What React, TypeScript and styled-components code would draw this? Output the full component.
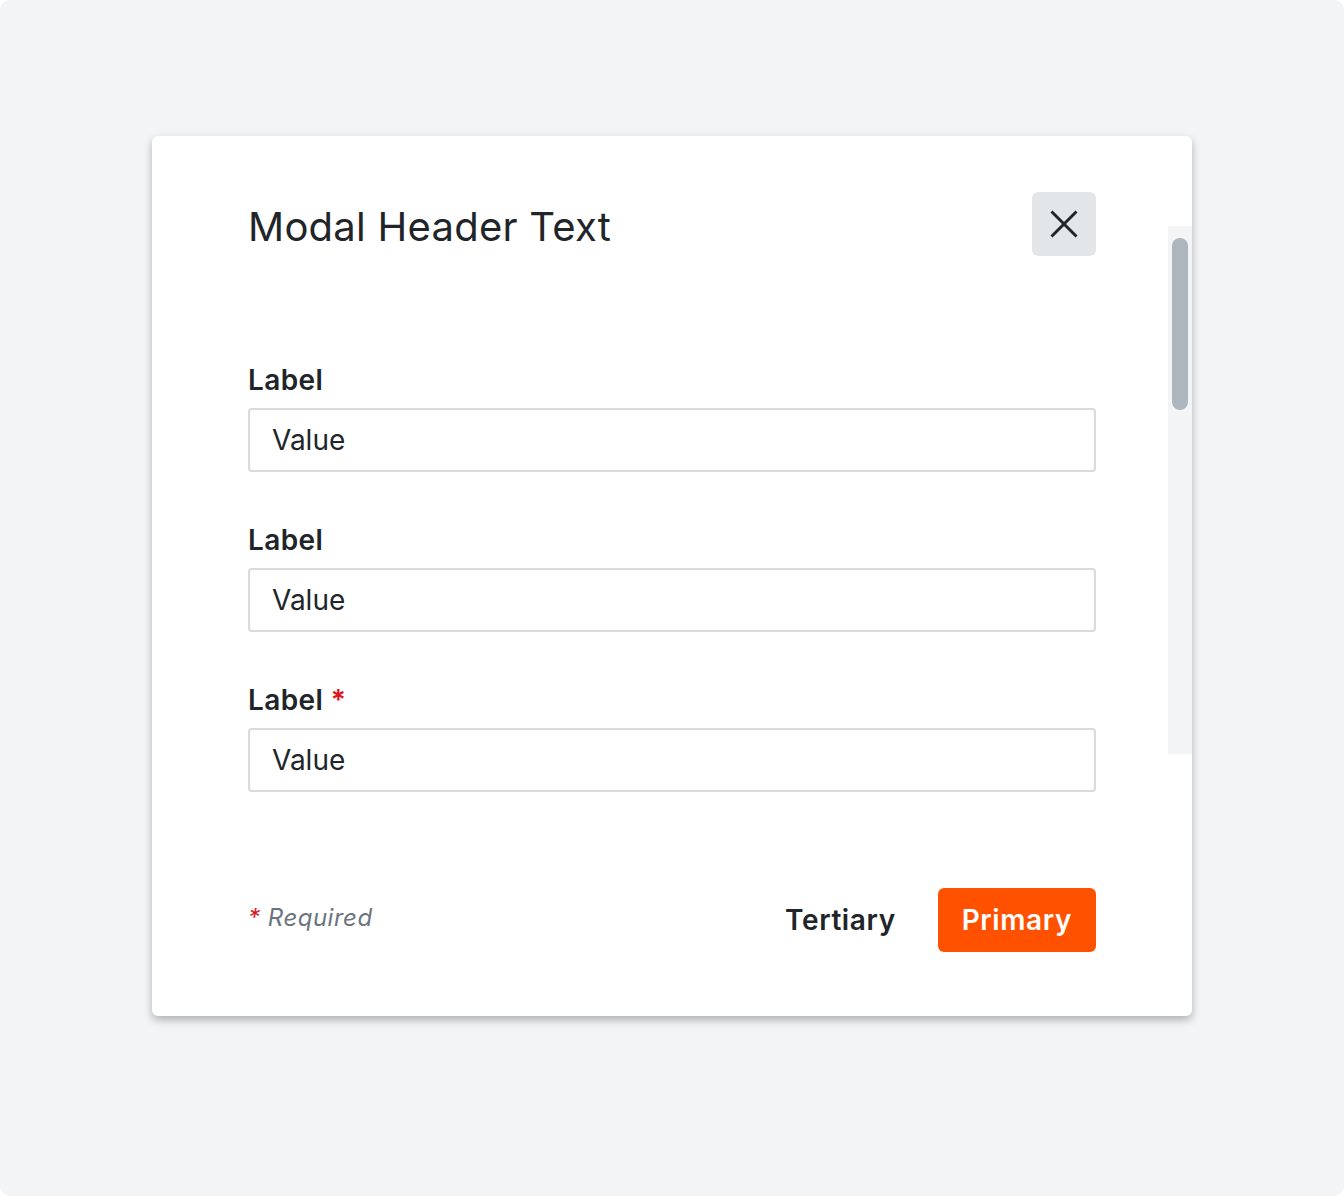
import React from "react";
import styled, { createGlobalStyle } from "styled-components";

const GlobalStyle = createGlobalStyle`
  html, body { margin: 0; padding: 0; background: #ffffff; }
  body { font-family: Inter, "Noto Sans", "Liberation Sans", sans-serif; color: #212529; }
  * { box-sizing: border-box; }
`;

const Page = styled.div`
  width: 1344px;
  height: 1196px;
  background: #f3f4f6;
  border-radius: 10px;
  display: flex;
  justify-content: center;
  align-items: flex-start;
  padding-top: 136px;
`;

const Modal = styled.div`
  width: 1040px;
  height: 880px;
  background: #ffffff;
  border-radius: 6px;
  box-shadow: 0 4px 8px rgba(0, 0, 0, 0.28);
  display: flex;
`;

const Main = styled.div`
  flex: 1;
  display: flex;
  flex-direction: column;
  padding: 56px 72px 64px 96px;
`;

const Rail = styled.div`
  width: 24px;
  padding-top: 90px;
  display: flex;
  flex-direction: column;
`;

const Track = styled.div`
  height: 528px;
  background: #f3f4f6;
  padding: 12px 4px 0;
`;

const Thumb = styled.div`
  height: 172px;
  border-radius: 8px;
  background: #adb5bd;
`;

const Header = styled.div`
  height: 64px;
  display: flex;
  align-items: center;
  justify-content: space-between;
`;

const Title = styled.h2`
  margin: 6px 0 0;
  font-size: 40px;
  font-weight: 400;
  line-height: 1.2;
  letter-spacing: 0.25px;
  color: #212529;
`;

const CloseButton = styled.button`
  width: 64px;
  height: 64px;
  border: none;
  border-radius: 6px;
  background: #e3e6e8;
  display: flex;
  align-items: center;
  justify-content: center;
  padding: 0;
  cursor: pointer;
  color: #212529;
`;

const Fields = styled.div`
  margin-top: 106px;
  display: flex;
  flex-direction: column;
  gap: 50px;
`;

const Field = styled.div`
  display: flex;
  flex-direction: column;
  gap: 10px;
`;

const Label = styled.label`
  font-size: 28px;
  font-weight: 600;
  line-height: 36px;
  letter-spacing: 0.4px;
  color: #212529;
`;

const Star = styled.span`
  color: #e0141e;
`;

const Input = styled.div`
  height: 64px;
  border: 2px solid #d8dcdf;
  border-radius: 4px;
  padding: 0 22px;
  display: flex;
  align-items: center;
  font-size: 28px;
  color: #212529;
`;

const Footer = styled.div`
  margin-top: 96px;
  display: flex;
  align-items: center;
  justify-content: space-between;
`;

const Required = styled.span`
  font-size: 24px;
  font-style: italic;
  letter-spacing: 0.5px;
  color: #6c757d;
  margin-top: -6px;
`;

const Actions = styled.div`
  display: flex;
  gap: 18px;
`;

const Button = styled.button<{ $primary?: boolean }>`
  height: 64px;
  padding: 0 24px;
  border: none;
  border-radius: 6px;
  font-family: inherit;
  font-size: 28px;
  font-weight: 600;
  letter-spacing: 0.6px;
  cursor: pointer;
  background: ${(p) => (p.$primary ? "#ff5100" : "transparent")};
  color: ${(p) => (p.$primary ? "#ffffff" : "#212529")};
`;

const CloseIcon = () => (
  <svg width="28" height="28" viewBox="0 0 28 28" fill="none">
    <path d="M1.5 1.5L26.5 26.5M26.5 1.5L1.5 26.5" stroke="currentColor" strokeWidth="3" />
  </svg>
);

const fields = [
  { label: "Label", required: false },
  { label: "Label", required: false },
  { label: "Label", required: true },
];

export default function App() {
  return (
    <>
      <GlobalStyle />
      <Page>
        <Modal>
          <Main>
            <Header>
              <Title>Modal Header Text</Title>
              <CloseButton aria-label="Close">
                <CloseIcon />
              </CloseButton>
            </Header>
            <Fields>
              {fields.map((f, i) => (
                <Field key={i}>
                  <Label>
                    {f.label}
                    {f.required && <Star> *</Star>}
                  </Label>
                  <Input>Value</Input>
                </Field>
              ))}
            </Fields>
            <Footer>
              <Required>
                <Star>*</Star> Required
              </Required>
              <Actions>
                <Button>Tertiary</Button>
                <Button $primary>Primary</Button>
              </Actions>
            </Footer>
          </Main>
          <Rail>
            <Track>
              <Thumb />
            </Track>
          </Rail>
        </Modal>
      </Page>
    </>
  );
}
